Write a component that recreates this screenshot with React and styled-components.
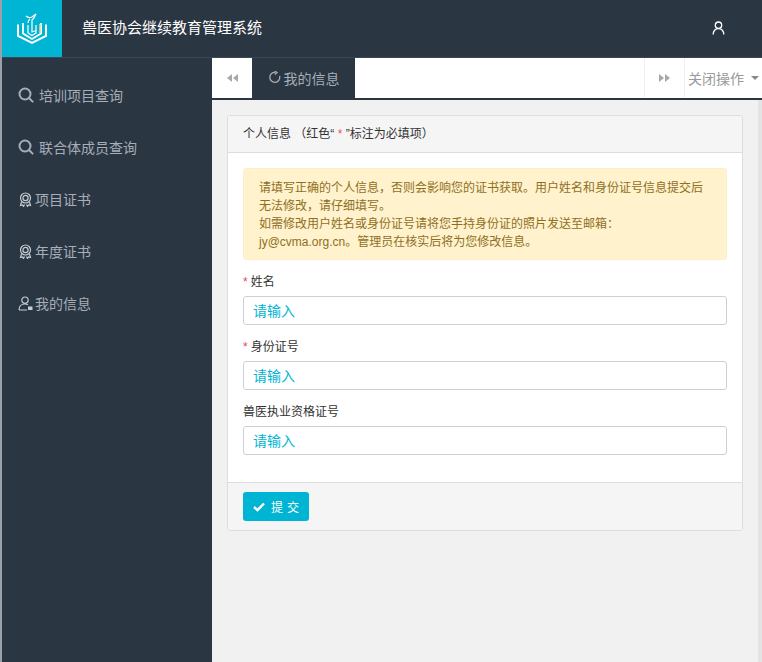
import React from "react";
import styled, { createGlobalStyle } from "styled-components";

const Global = createGlobalStyle`
  html, body { margin: 0; padding: 0; height: 100%; overflow: hidden; }
  body { font-family: "Liberation Sans", "Noto Sans CJK SC", sans-serif; font-size: 12px; color: #333; }
  * { box-sizing: border-box; }
`;
const Shell = styled.div`
  width: 762px; height: 662px; display: flex; flex-direction: column;
  border-left: 2px solid #9aa0a6; background: #f1f1f1; overflow: hidden;
`;
const TopBar = styled.header`
  height: 58px; flex: none; display: flex; align-items: stretch; background: #2b3643;
  border-bottom: 1px solid #3d4754; color: #fff;
`;
const LogoBox = styled.div`
  width: 60px; height: 57px; background: #00b4d4; display: flex; align-items: center; justify-content: center;
`;
const Title = styled.div`
  margin-left: 20px; flex: 1; font-size: 15px; line-height: 55px;
`;
const UserBtn = styled.div`
  width: 86px; display: flex; align-items: center; padding: 0 0 2px 36px;
`;
const Main = styled.div` flex: 1; display: flex; min-height: 0; `;
const Side = styled.nav`
  width: 210px; flex: none; background: #2b3643; padding-top: 11px;
`;
const NavRow = styled.div`
  height: 52px; display: flex; align-items: center; padding-left: 16px; color: #a6aeb8; font-size: 14px;
  gap: ${p => (p.$wide ? 5 : 2)}px;
  svg { flex: none; }
`;
const Content = styled.div` flex: 1; display: flex; flex-direction: column; min-width: 0; `;
const TabBar = styled.div`
  height: 42px; flex: none; display: flex; background: #fff; border-bottom: 2px solid #2b3643;
`;
const ArrowCell = styled.div`
  width: 40px; display: flex; align-items: center; justify-content: center;
  ${p => p.$edge && "border-left: 1px solid #eee;"}
`;
const ActiveTab = styled.div`
  width: 103px; background: #2b3643; color: #a6aeb8; font-size: 14px; padding-bottom: 1px;
  display: flex; align-items: center; justify-content: center; gap: 3px;
`;
const Spacer = styled.div` flex: 1; `;
const CloseOps = styled.div`
  width: 78px; border-left: 1px solid #eee; color: #999; font-size: 14px; white-space: nowrap;
  display: flex; align-items: center; padding-left: 3px; gap: 7px;
`;
const Caret = styled.span`
  width: 0; height: 0; border-left: 4px solid transparent; border-right: 4px solid transparent;
  border-top: 4px solid #888;
`;
const Pane = styled.div`
  flex: 1; display: flex; min-height: 0; background: #f1f1f1;
`;
const PaneInner = styled.div` flex: 1; padding: 15px 15px 0 15px; min-width: 0; `;
const ScrollStrip = styled.div` width: 4px; flex: none; background: #e4e4e4; `;
const Card = styled.section`
  background: #fff; border: 1px solid #ddd; border-radius: 3px; overflow: hidden;
`;
const CardHead = styled.div`
  height: 37px; background: #f5f5f5; border-bottom: 1px solid #ddd; padding: 0 15px;
  display: flex; align-items: center; white-space: pre; line-height: 36px; color: #333;
`;
const Red = styled.span` color: #f0506e; `;
const CardBody = styled.div` padding: 15px 15px 27px; `;
const Notice = styled.div`
  background: #fff2cc; border: 1px solid #fcefc8; border-radius: 3px; color: #8f6f1e;
  padding: 10px 15px 10px 15px; line-height: 18px; height: 92px; margin-bottom: 12px;
`;
const Field = styled.div` margin-bottom: 12px; &:last-child { margin-bottom: 0; } `;
const Label = styled.label`
  display: block; height: 24px; padding-top: 1px; line-height: 18px; color: #333;
`;
const Star = styled.span` color: #e6436d; margin-right: 3px; `;
const Input = styled.input`
  display: block; width: 100%; height: 29px; border: 1px solid #ccd1d9; border-radius: 3px;
  padding: 0 9px; font: 14px "Liberation Sans", "Noto Sans CJK SC", sans-serif; background: #fff; outline: none;
  &::placeholder { color: #00b4d4; opacity: 1; }
`;
const CardFoot = styled.div`
  height: 48px; background: #f5f5f5; border-top: 1px solid #ddd; padding: 9px 15px;
`;
const Submit = styled.button`
  width: 66px; height: 29px; border: none; border-radius: 3px; background: #00b4d4; color: #fff;
  display: flex; align-items: center; justify-content: center; gap: 6px; padding: 0 0 0 4px;
  font: 12px "Liberation Sans", "Noto Sans CJK SC", sans-serif; letter-spacing: 4px;
`;

const Search = () => (
  <svg width="16" height="16" viewBox="0 0 16 16" fill="none" stroke="#a6aeb8" strokeWidth="2">
    <circle cx="7" cy="7" r="5.5" />
    <path d="M11 11l3.600 3.600" strokeLinecap="round" />
  </svg>
);
const Award = () => (
  <svg width="15" height="15" viewBox="0 0 15 15" fill="none" stroke="#c5ccd3" strokeWidth="1.2">
    <circle cx="7.5" cy="6" r="5" />
    <circle cx="7.5" cy="6" r="2.6" />
    <path d="M3.500 10l-1 3.500 2-.5 1 1.500 1-2M11.500 10l1 3.500-2-.5-1 1.500-1-2" />
  </svg>
);
const PersonLock = () => (
  <svg width="15" height="15" viewBox="0 0 15 15" fill="none" stroke="#c5ccd3" strokeWidth="1.2">
    <circle cx="7" cy="4.200" r="3.200" />
    <path d="M1 14c0-3.500 2-6 6-6 1 0 2 .2 3 .7M1 14h8" />
    <rect x="10" y="10.500" width="4.500" height="3.500" fill="#c5ccd3" stroke="none" />
  </svg>
);
const User = () => (
  <svg width="13" height="14" viewBox="0 0 13 14" fill="none" stroke="#fff" strokeWidth="1.3">
    <circle cx="6.500" cy="4.200" r="3.200" />
    <path d="M1.200 13.500c0-3.500 2-5.900 5.300-5.900s5.300 2.400 5.300 5.900" />
  </svg>
);
const Rewind = ({ flip }) => (
  <svg width="11" height="8" viewBox="0 0 11 8" fill="#a9a9a9" style={flip ? { transform: "scaleX(-1)" } : undefined}>
    <path d="M5 0v8L0 4zM11 0v8L6 4z" />
  </svg>
);
const Refresh = () => (
  <svg width="13" height="13" viewBox="0 0 13 13" fill="none" stroke="#a6aeb8" strokeWidth="1.3">
    <path d="M7.500 1.400A5 5 0 1 0 11.600 5" />
    <path d="M6.600 0l2.400 1.500L6.800 3.400" />
  </svg>
);
const Check = () => (
  <svg width="12" height="10" viewBox="0 0 12 10" fill="none" stroke="#fff" strokeWidth="2.400">
    <path d="M1 5l3.500 3.200L11 1.500" />
  </svg>
);
const Logo = () => (
  <svg width="32" height="32" viewBox="0 0 32 32" fill="none" stroke="#fff" strokeWidth="2">
    <path d="M2 11.500v11.500l14 7 14-7V11.500" />
    <path d="M7 10v10.500l9 5.500 9-5.500V10" strokeWidth="1.800" />
    <path d="M24 11v9" stroke="#f3d58a" strokeWidth="1.500" />
    <path d="M12 12v8l4 2.500 4-2.500v-8" strokeWidth="1.200" />
    <path d="M10 3c2 2 4 2 6 1l4-3-2 4-2 2v12l4-1.500M14 6c-1.500 1-2 2-2 4" strokeWidth="1.200" />
  </svg>
);

const nav = [
  [Search, "培训项目查询", true],
  [Search, "联合体成员查询", true],
  [Award, "项目证书", false],
  [Award, "年度证书", false],
  [PersonLock, "我的信息", false],
];

export default function App() {
  return (
    <Shell>
      <Global />
      <TopBar>
        <LogoBox><Logo /></LogoBox>
        <Title>兽医协会继续教育管理系统</Title>
        <UserBtn><User /></UserBtn>
      </TopBar>
      <Main>
        <Side>
          {nav.map(([Icon, text, wide]) => (
            <NavRow key={text} $wide={wide}><Icon />{text}</NavRow>
          ))}
        </Side>
        <Content>
          <TabBar>
            <ArrowCell><Rewind /></ArrowCell>
            <ActiveTab><Refresh />我的信息</ActiveTab>
            <Spacer />
            <ArrowCell $edge><Rewind flip /></ArrowCell>
            <CloseOps>关闭操作<Caret /></CloseOps>
          </TabBar>
          <Pane>
            <PaneInner>
              <Card>
                <CardHead>个人信息 （红色“ <Red>*</Red> ”标注为必填项）</CardHead>
                <CardBody>
                  <Notice>
                    请填写正确的个人信息，否则会影响您的证书获取。用户姓名和身份证号信息提交后<br />
                    无法修改，请仔细填写。<br />
                    如需修改用户姓名或身份证号请将您手持身份证的照片发送至邮箱：<br />
                    jy@cvma.org.cn。管理员在核实后将为您修改信息。
                  </Notice>
                  <Field>
                    <Label><Star>*</Star>姓名</Label>
                    <Input placeholder="请输入" />
                  </Field>
                  <Field>
                    <Label><Star>*</Star>身份证号</Label>
                    <Input placeholder="请输入" />
                  </Field>
                  <Field>
                    <Label>兽医执业资格证号</Label>
                    <Input placeholder="请输入" />
                  </Field>
                </CardBody>
                <CardFoot>
                  <Submit><Check />提交</Submit>
                </CardFoot>
              </Card>
            </PaneInner>
            <ScrollStrip />
          </Pane>
        </Content>
      </Main>
    </Shell>
  );
}
